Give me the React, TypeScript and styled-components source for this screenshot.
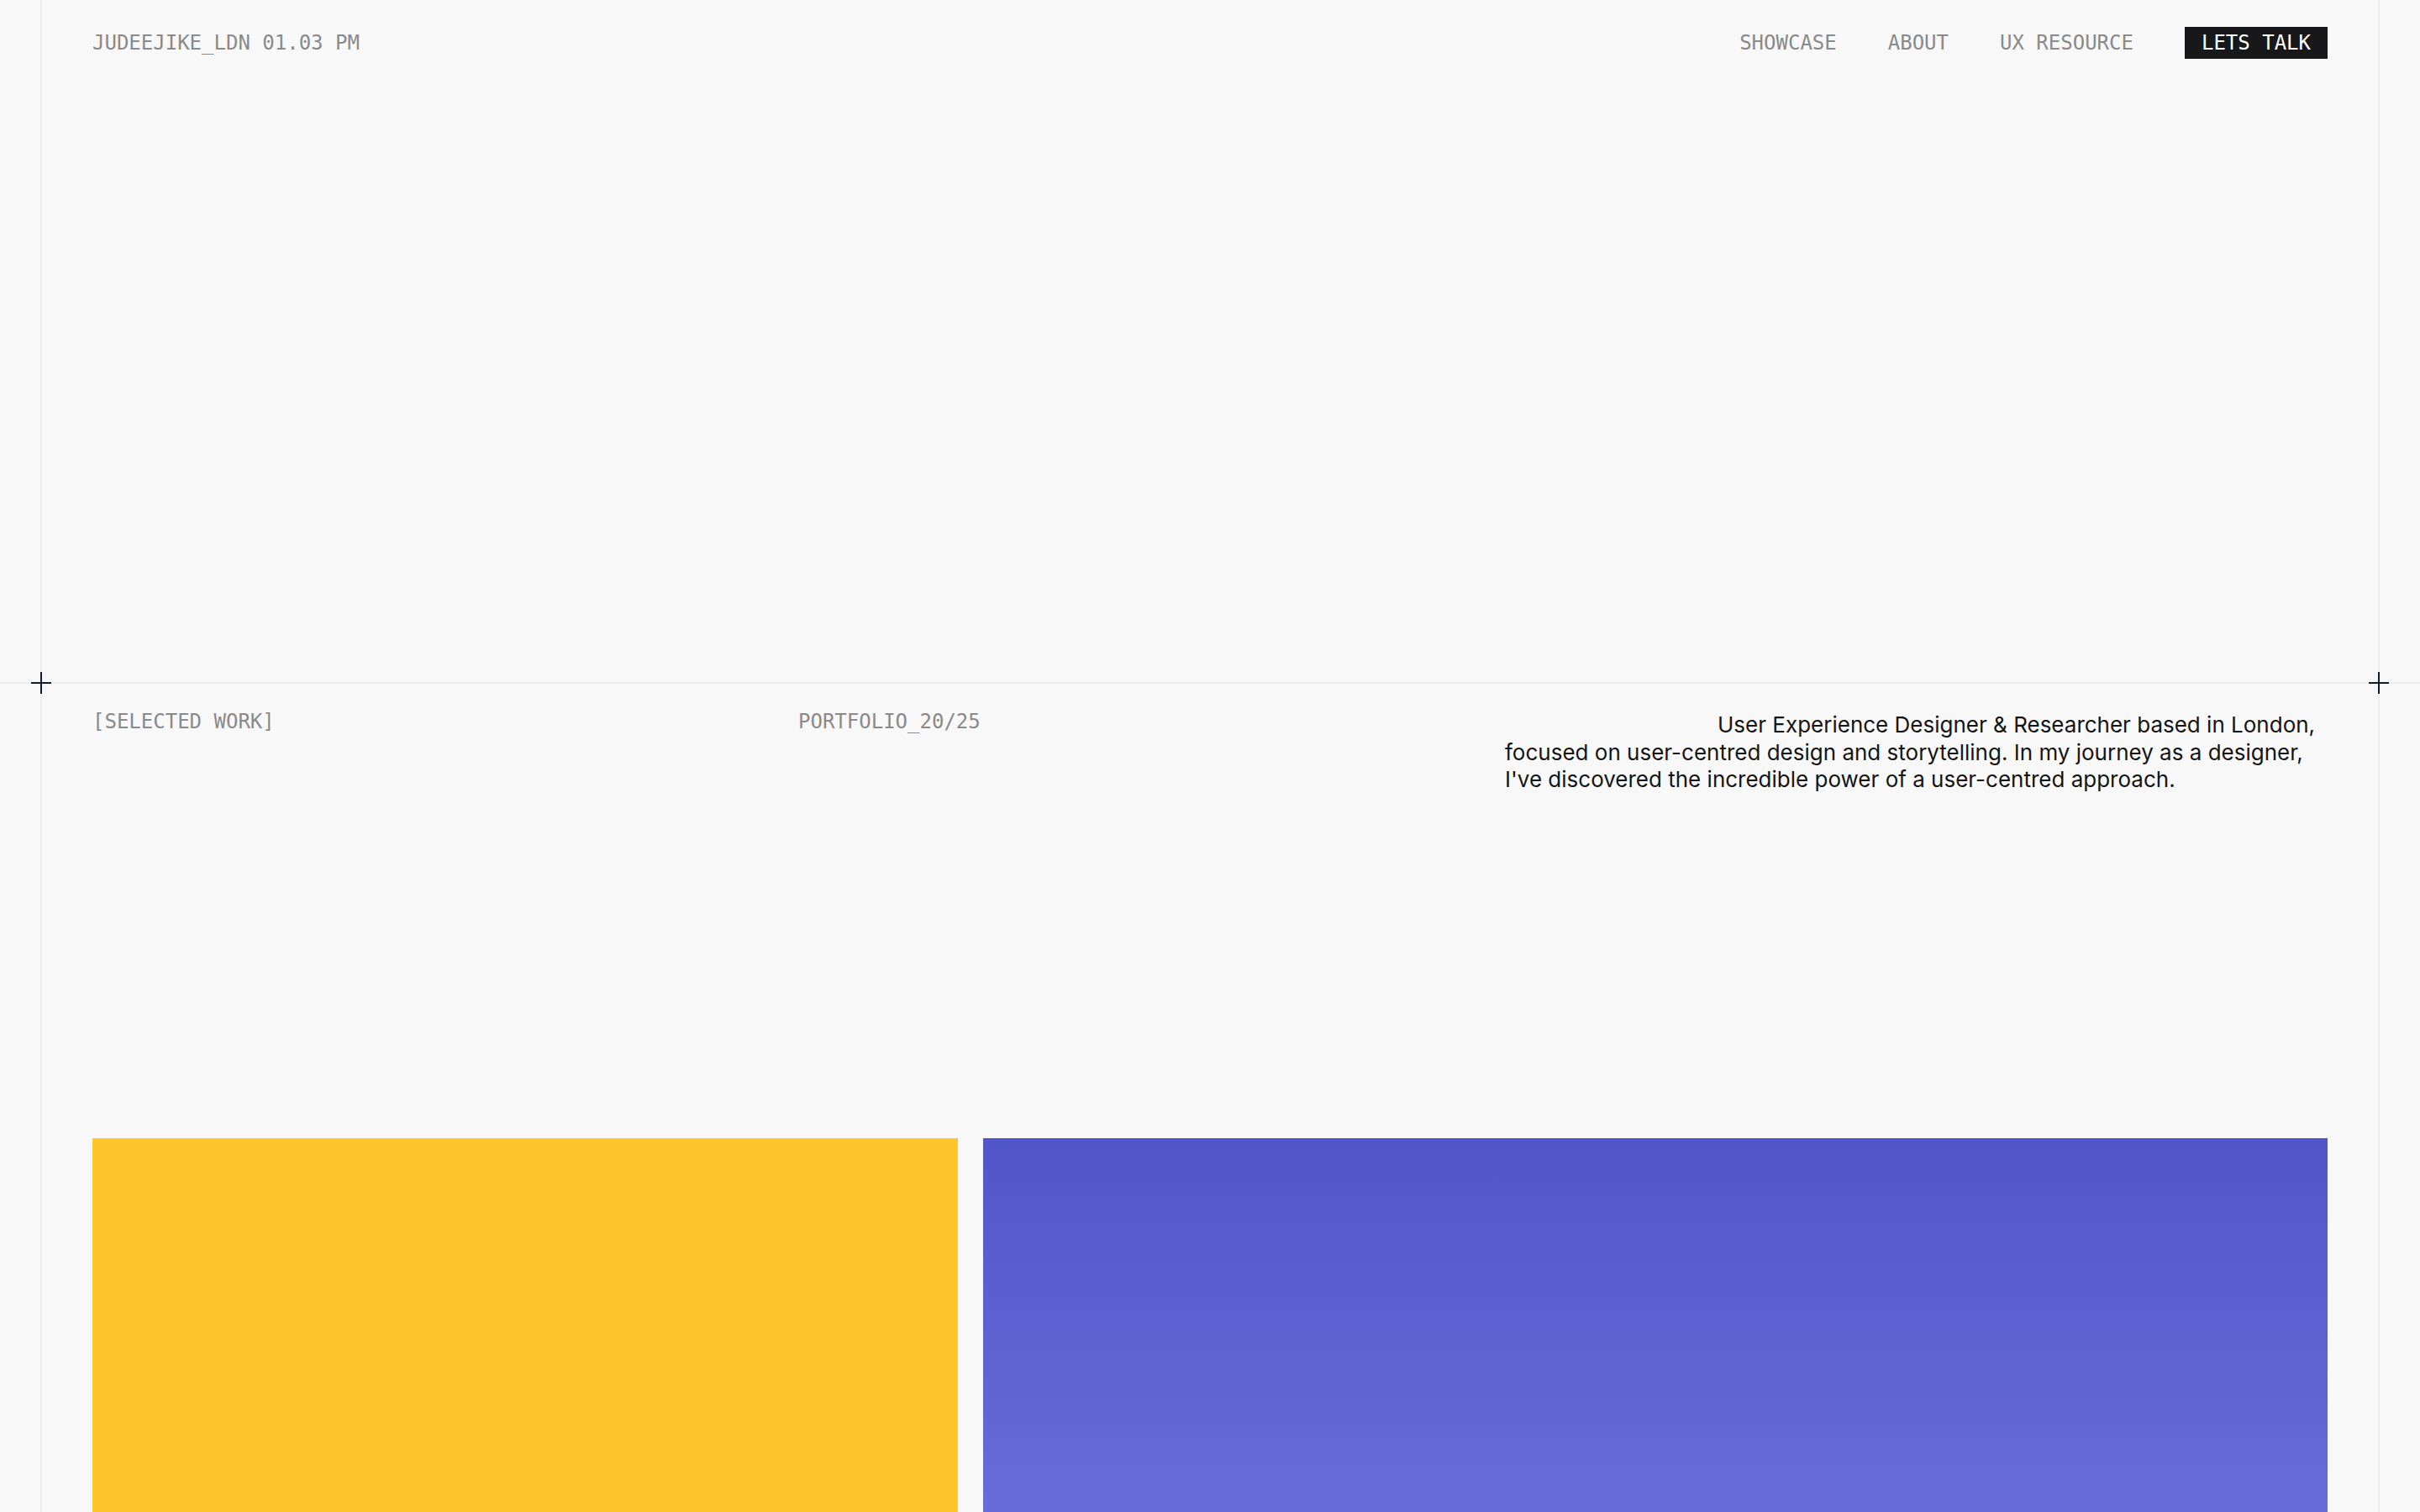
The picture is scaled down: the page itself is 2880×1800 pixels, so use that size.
import React from "react";
import styled, { createGlobalStyle } from "styled-components";

const GlobalStyle = createGlobalStyle`
  html, body {
    margin: 0;
    padding: 0;
    background: #f8f8f8;
  }
  * { box-sizing: border-box; }
`;

const Page = styled.div`
  width: 100%;
  min-height: 100vh;
  background: #f8f8f8;
  overflow: hidden;
`;

const Frame = styled.div`
  margin: 0 48px;
  min-height: 100vh;
  border-left: 2px solid #ebebf0;
  border-right: 2px solid #ebebf0;
  display: flex;
  flex-direction: column;
`;

const Top = styled.section`
  height: 812px;
  padding: 32px 60px 0;
`;

const Header = styled.header`
  display: flex;
  align-items: center;
  justify-content: space-between;
  height: 38px;
`;

const Mono = styled.span`
  font-family: "DejaVu Sans Mono", "Liberation Mono", monospace;
  font-size: 24px;
  line-height: 24px;
  color: #8a8a8a;
  letter-spacing: 0;
  text-transform: uppercase;
  white-space: nowrap;
`;

const Nav = styled.nav`
  display: flex;
  align-items: center;
  gap: 61px;
`;

const NavLink = styled(Mono).attrs({ as: "a" })`
  text-decoration: none;
  cursor: pointer;
`;

const TalkButton = styled.button`
  font-family: "DejaVu Sans Mono", "Liberation Mono", monospace;
  font-size: 24px;
  line-height: 38px;
  height: 38px;
  padding: 0 20px;
  border: none;
  background: #18181a;
  color: #ffffff;
  cursor: pointer;
`;

const Divider = styled.div`
  position: relative;
  height: 2px;
  margin: 0 -50px;
  background: #ebebf0;
`;

const Cross = styled.span<{ $side: "left" | "right" }>`
  position: absolute;
  top: -12px;
  ${(p) => (p.$side === "left" ? "left: 37px;" : "right: 37px;")}
  width: 24px;
  height: 26px;
  &::before,
  &::after {
    content: "";
    position: absolute;
    background: #0e1b2a;
  }
  &::before {
    left: 0;
    right: 0;
    top: 12px;
    height: 2px;
  }
  &::after {
    top: 0;
    bottom: 0;
    left: 11px;
    width: 2px;
  }
`;

const Intro = styled.section`
  height: 541px;
  padding: 33px 60px 0;
  display: grid;
  grid-template-columns: 840px 841px 1fr;
  align-items: start;
`;

const Label = styled(Mono)`
  display: block;
`;

const Blurb = styled.p`
  margin: 0;
  font-family: Inter, "Noto Sans", sans-serif;
  font-size: 26px;
  line-height: 32.5px;
  color: #141414;
  text-indent: 253px;
  white-space: nowrap;
`;

const Work = styled.section`
  padding: 0 60px;
  display: grid;
  grid-template-columns: 1030fr 1600fr;
  gap: 30px;
`;

const Card = styled.div<{ $tone: "yellow" | "blue" }>`
  height: 900px;
  background: ${(p) =>
    p.$tone === "yellow"
      ? "#ffc62b"
      : "linear-gradient(180deg, #5055c9 0px, #676cdb 445px, #7479e2 900px)"};
`;

export default function App() {
  return (
    <Page>
      <GlobalStyle />
      <Frame>
        <Top>
          <Header>
            <Mono>JUDEEJIKE_LDN 01.03 PM</Mono>
            <Nav>
              <NavLink>SHOWCASE</NavLink>
              <NavLink>ABOUT</NavLink>
              <NavLink>UX RESOURCE</NavLink>
              <TalkButton>LETS TALK</TalkButton>
            </Nav>
          </Header>
        </Top>
        <Divider>
          <Cross $side="left" />
          <Cross $side="right" />
        </Divider>
        <Intro>
          <Label>[SELECTED WORK]</Label>
          <Label>PORTFOLIO_20/25</Label>
          <Blurb>
            User Experience Designer &amp; Researcher based in London,
            <br />
            focused on user-centred design and storytelling. In my journey as a designer,
            <br />
            I've discovered the incredible power of a user-centred approach.
          </Blurb>
        </Intro>
        <Work>
          <Card $tone="yellow" />
          <Card $tone="blue" />
        </Work>
      </Frame>
    </Page>
  );
}
